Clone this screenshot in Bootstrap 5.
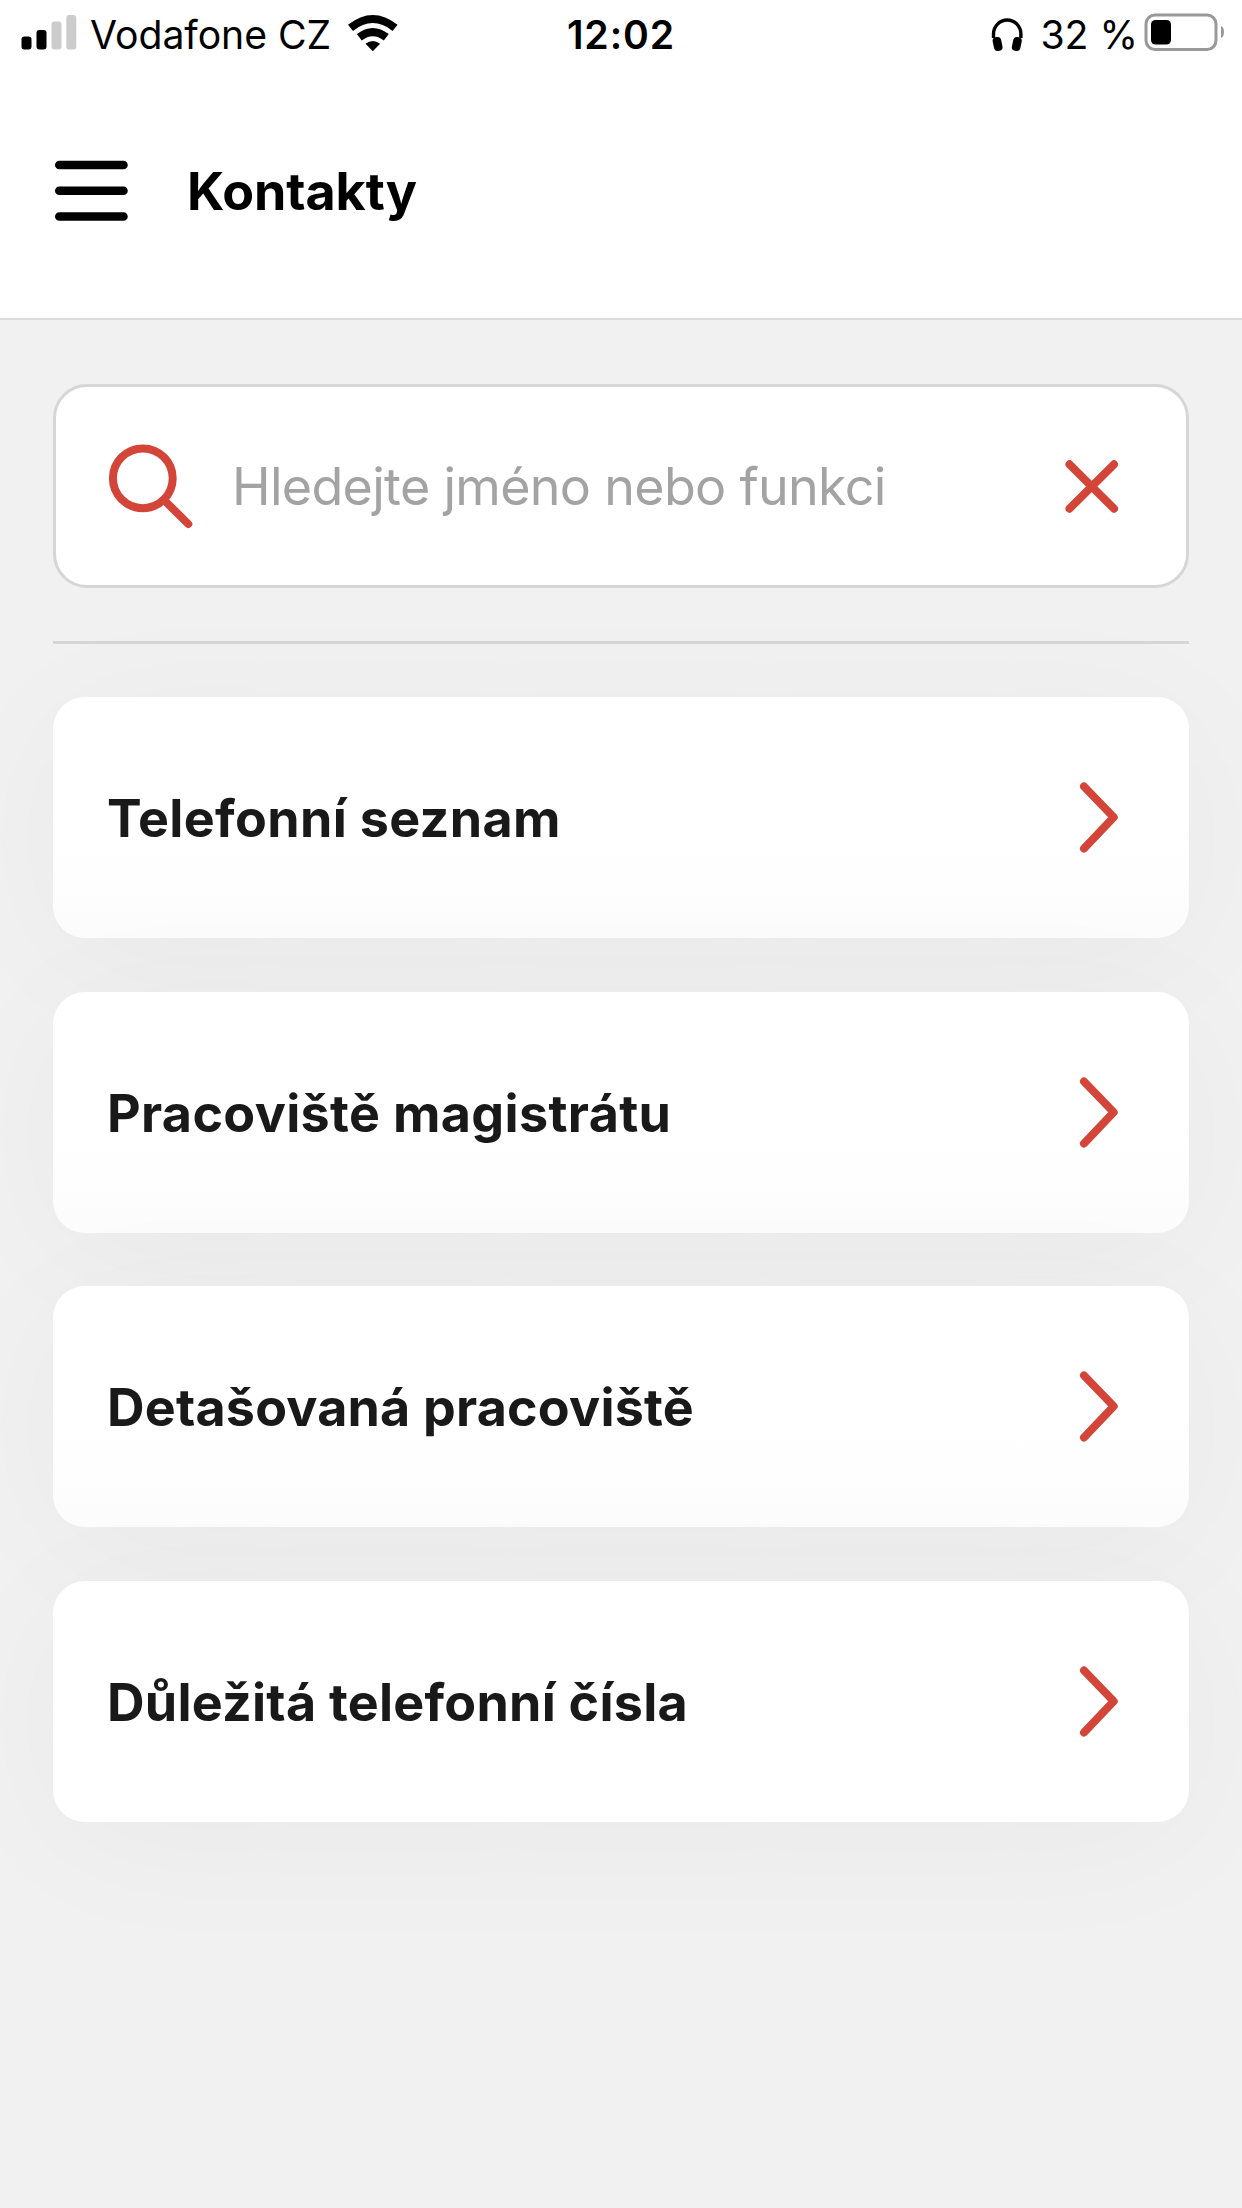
<!DOCTYPE html>
<html lang="cs">
<head>
<meta charset="utf-8">
<meta name="viewport" content="width=device-width, initial-scale=1">
<title>Kontakty</title>
<link href="https://cdn.jsdelivr.net/npm/bootstrap@5.3.0/dist/css/bootstrap.min.css" rel="stylesheet">
<style>
  body { font-family: Inter, "Liberation Sans", sans-serif; background: #f1f1f1; color: #000; min-height: 2208px; overflow-x: hidden; }
  svg { display: block; flex: none; overflow: visible; }
  .status { height: 68px; font-size: 39.2px; line-height: 69px; }
  .status > div { flex: 1 1 0; white-space: nowrap; }
  .carrier { margin: 0 16px 0 0; letter-spacing: -.05px; }
  .clock { letter-spacing: .9px; }
  .charge { margin: 0 6px 0 17px; }
  .topbar { height: 252px; padding: 0 55px 6px; border-bottom: 2px solid #dcdcdc; }
  .topbar .inner { height: 246px; }
  .title { font-size: 52px; font-weight: 700; line-height: 64px; margin: 0 0 0 59px; padding-top: 2px; letter-spacing: -.1px; }
  main { padding: 64px 53px 0; }
  .search-box { height: 204px; border: 3px solid #d6d6d6; border-radius: 34px; padding: 0 67px 0 53px; }
  .search-box input { font-size: 52px; line-height: 64px; height: 80px; margin-left: 39px; letter-spacing: -.7px; }
  .search-box input::placeholder { color: #a3a3a3; opacity: 1; }
  .rule { height: 3px; background: #d6d6d6; margin: 53px 0; }
  .menu { display: flex; flex-direction: column; gap: 53.5px; }
  .tile { height: 241px; border-radius: 32px; background: #fff; padding: 0 71px 0 54px; color: #191919; font-size: 52px; font-weight: 700; line-height: 64px; letter-spacing: .35px; box-shadow: 0 20px 150px rgba(0,0,0,.035); }
  .tile:not(:last-child) { background: linear-gradient(#fff 60%, #fcfcfc); }
  .tile span { padding-top: 3px; }
  .tile:nth-child(3) { letter-spacing: .2px; }
  .tile:nth-child(4) { letter-spacing: .25px; }
</style>
</head>
<body>
<header class="bg-white">
  <div class="status d-flex">
    <div class="d-flex">
      <svg width="90" height="68"><rect x="21.500" y="36.500" width="10" height="13" rx="3"/><rect x="36.500" y="30" width="10" height="19.500" rx="3"/><g fill="#ccc"><rect x="51.500" y="21.500" width="10" height="28" rx="3"/><rect x="66.300" y="15" width="10" height="34.500" rx="3"/></g></svg>
      <span class="carrier">Vodafone CZ</span>
      <svg width="50" height="68" viewBox="347.500 0 50 68"><g fill="none" stroke="#000" stroke-width="8"><path d="M351 27.800Q373.300 10.200 395.600 27.800"/><path d="M359.800 37.300Q373.300 27 386.800 37.300"/></g><path d="M366 43.800Q373.300 38 380.600 43.800L373.300 51.300Z"/></svg>
    </div>
    <div class="text-center fw-semibold"><span class="clock">12:02</span></div>
    <div class="d-flex justify-content-end">
      <svg width="32" height="68" viewBox="991.500 0 32 68"><path d="M994 38V34a13.700 14 0 0 1 27.400 0V38" fill="none" stroke="#000" stroke-width="3.400"/><rect x="993.800" y="37" width="8.600" height="14" rx="3.800" transform="rotate(-12 998 44)"/><rect x="1013" y="37" width="8.600" height="14" rx="3.800" transform="rotate(12 1017.400 44)"/></svg>
      <span class="charge">32 %</span>
      <svg width="98" height="68" viewBox="1144 0 98 68"><rect x="1146" y="15" width="70" height="34.500" rx="9" fill="none" stroke="#999" stroke-width="3"/><rect x="1151" y="20" width="20" height="24.500" rx="4.500"/><path d="M1221 26q3 1 3 6t-3 6z" fill="#999"/></svg>
    </div>
  </div>
  <div class="topbar">
    <div class="inner d-flex align-items-center">
      <svg width="73" height="62" stroke="#000" stroke-width="8.500" stroke-linecap="round"><path d="M4.250 5H68.500M4.250 30.700H68.500M4.250 56.500H68.500"/></svg>
      <h1 class="title">Kontakty</h1>
    </div>
  </div>
</header>
<main>
  <div class="search-box bg-white d-flex align-items-center">
    <svg width="84" height="84" viewBox="109 444.500 84 84" fill="none" stroke="#d34538" stroke-width="8" stroke-linecap="round"><circle cx="142.800" cy="478.800" r="29.900"/><path d="M164.500 501L188.300 524.500"/></svg>
    <input class="form-control border-0 p-0 shadow-none bg-transparent" type="text" placeholder="Hledejte jméno nebo funkci" aria-label="Hledejte jméno nebo funkci">
    <svg width="54" height="54" viewBox="1064.500 459 54 54" stroke="#d34538" stroke-width="8" stroke-linecap="round"><path d="M1069 464.300L1113.500 508.700M1113.500 464.300L1069 508.700"/></svg>
  </div>
  <div class="rule"></div>
  <nav class="menu">
    <a href="#" class="tile d-flex align-items-center justify-content-between text-decoration-none"><span>Telefonní seznam</span><svg width="38" height="71" viewBox="1080 782 38 71" fill="none" stroke="#d34538" stroke-width="8" stroke-linecap="round" stroke-linejoin="round"><path d="M1084 786.500L1113.700 817.300L1084 848.500"/></svg></a>
    <a href="#" class="tile d-flex align-items-center justify-content-between text-decoration-none"><span>Pracoviště magistrátu</span><svg width="38" height="71" viewBox="1080 782 38 71" fill="none" stroke="#d34538" stroke-width="8" stroke-linecap="round" stroke-linejoin="round"><path d="M1084 786.500L1113.700 817.300L1084 848.500"/></svg></a>
    <a href="#" class="tile d-flex align-items-center justify-content-between text-decoration-none"><span>Detašovaná pracoviště</span><svg width="38" height="71" viewBox="1080 782 38 71" fill="none" stroke="#d34538" stroke-width="8" stroke-linecap="round" stroke-linejoin="round"><path d="M1084 786.500L1113.700 817.300L1084 848.500"/></svg></a>
    <a href="#" class="tile d-flex align-items-center justify-content-between text-decoration-none"><span>Důležitá telefonní čísla</span><svg width="38" height="71" viewBox="1080 782 38 71" fill="none" stroke="#d34538" stroke-width="8" stroke-linecap="round" stroke-linejoin="round"><path d="M1084 786.500L1113.700 817.300L1084 848.500"/></svg></a>
  </nav>
</main>
<script src="https://cdn.jsdelivr.net/npm/bootstrap@5.3.0/dist/js/bootstrap.bundle.min.js"></script>
</body>
</html>
